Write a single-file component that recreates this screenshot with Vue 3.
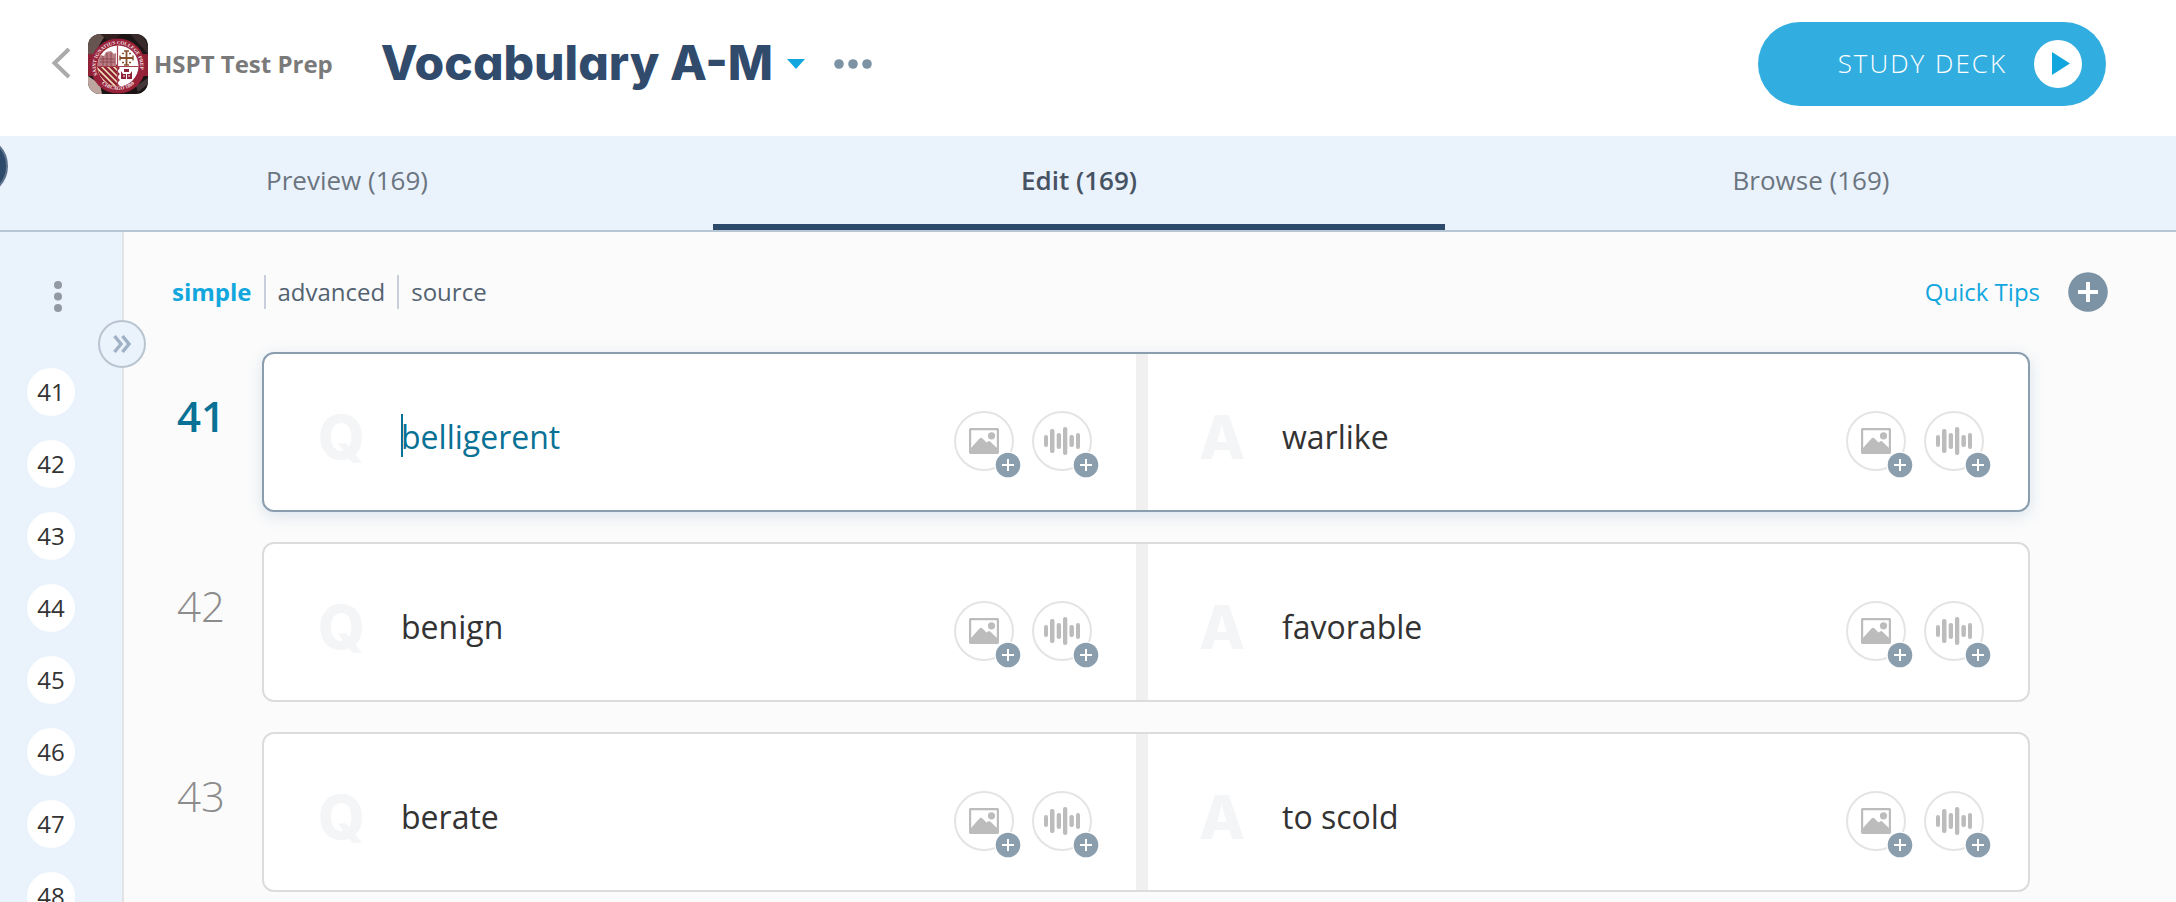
<script setup>
import { ref } from 'vue'

const tabs = [
  { id: 'preview', label: 'Preview (169)' },
  { id: 'edit', label: 'Edit (169)' },
  { id: 'browse', label: 'Browse (169)' },
]
const activeTab = ref('edit')

const modes = ['simple', 'advanced', 'source']
const activeMode = ref('simple')

const cardNumbers = [41, 42, 43, 44, 45, 46, 47, 48]
const activeCard = ref(41)

const cards = ref([
  { number: 41, sides: [{ key: 'Q', text: 'belligerent' }, { key: 'A', text: 'warlike' }] },
  { number: 42, sides: [{ key: 'Q', text: 'benign' }, { key: 'A', text: 'favorable' }] },
  { number: 43, sides: [{ key: 'Q', text: 'berate' }, { key: 'A', text: 'to scold' }] },
])
</script>

<template>
  <div class="page">
    <header class="header">
      <button class="icon-button back" type="button" aria-label="Back">
        <svg width="20" height="32" viewBox="0 0 20 32" fill="none" stroke="#aaaaaa" stroke-width="4">
          <path d="M18 1 3.500 15 18 29" />
        </svg>
      </button>
      <a class="class-link" href="#">
        <svg class="crest" width="60" height="60" viewBox="0 0 60 60" aria-hidden="true">
          <defs>
            <clipPath id="crestFrame"><rect width="60" height="60" rx="12" /></clipPath>
            <clipPath id="crestShield"><circle cx="30" cy="32" r="20.500" /></clipPath>
            <path id="ringTop" d="M9.500 41 A22.200 22.200 0 1 1 50.500 41" />
            <path id="ringBottom" d="M10 46 A25.200 25.200 0 0 0 50 46" />
          </defs>
          <g clip-path="url(#crestFrame)">
            <rect width="60" height="60" fill="#1c1415" />
            <path d="M0 0H18L6 20H0Z" fill="#65544f" />
            <path d="M12 0H34L22 8Z" fill="#31201f" />
            <path d="M42 0H54L60 12V20Z" fill="#382a2a" />
            <path d="M0 42 12 50 14 60H0Z" fill="#bda6a0" />
            <path d="M48 52 60 44V50L50 58Z" fill="#46383a" />
            <path d="M0 20H60V42H0Z" fill="#8e2136" />
            <circle cx="30" cy="32" r="27.500" fill="#982239" />
            <circle cx="30" cy="32" r="20.500" fill="#ffffff" />
            <g clip-path="url(#crestShield)">
              <path d="M9 32H29.500V54H9Z" fill="#f1e3b5" />
              <path d="M9 31 31 53M9 37 31 59M14 30 31 47M20 30 31 41M26 30 31 35" stroke="#8e2136" stroke-width="2.600" />
              <path d="M10 32V24L13 21 16 22 18 18 23 17 26 20 28 19V32Z" fill="#b77d82" />
              <path d="M12 25H27M12 28H27M15 22V32M19 19V32M23 19V32" stroke="#8f4651" stroke-width="1" />
              <path d="M29.500 11V54M9 32.500H51" stroke="#a63c4c" stroke-width="1.200" />
            </g>
            <path d="M38.500 17V31M32 24H45" stroke="#85502b" stroke-width="1.800" />
            <path d="M36 17H41M36 31H41M32 21.500V26.500M45 21.500V26.500" stroke="#85502b" stroke-width="1.400" />
            <path d="M34 19.500H36M41 19.500H43M34 28.500H36M41 28.500H43" stroke="#85502b" stroke-width="1.600" />
            <path d="M33 37 35 40H42L44 37V45H33ZM36 35H41V38H36Z" fill="#8e2136" />
            <path d="M35 42H37M40 42H42M38.500 39V45" stroke="#ffffff" stroke-width="1" />
            <text class="crest-text"><textPath href="#ringTop">SAINT IGNATIUS COLLEGE PREP</textPath></text>
            <text class="crest-text"><textPath href="#ringBottom" startOffset="50%" text-anchor="middle">CHICAGO 1869</textPath></text>
          </g>
        </svg>
        <span class="class-name">HSPT Test Prep</span>
      </a>
      <h1 class="title">Vocabulary A-M</h1>
      <button class="icon-button switcher" type="button" aria-label="Choose deck">
        <svg width="18" height="10" viewBox="0 0 18 10"><path d="M0 0H18L9 10Z" fill="#11a7de" /></svg>
      </button>
      <button class="icon-button more" type="button" aria-label="Deck options">
        <svg width="38" height="10" viewBox="0 0 38 10" fill="#7c93a5">
          <circle cx="5" cy="5" r="4.800" /><circle cx="19" cy="5" r="4.800" /><circle cx="33" cy="5" r="4.800" />
        </svg>
      </button>
      <button class="study" type="button">
        <span class="study-label">STUDY DECK</span>
        <svg width="48" height="48" viewBox="0 0 48 48" aria-hidden="true">
          <circle cx="24" cy="24" r="24" fill="#ffffff" />
          <path d="M18 12 36 23.500 18 35Z" fill="#11a7de" />
        </svg>
      </button>
    </header>

    <nav class="tabs">
      <button
        v-for="tab in tabs"
        :key="tab.id"
        type="button"
        class="tab"
        :class="{ active: tab.id === activeTab }"
        @click="activeTab = tab.id"
      >{{ tab.label }}</button>
      <button class="drawer" type="button" aria-label="Open menu"></button>
    </nav>

    <div class="body">
      <aside class="sidebar">
        <button class="icon-button side-menu" type="button" aria-label="Card list options">
          <svg width="8" height="32" viewBox="0 0 8 32" fill="#9299a3">
            <circle cx="4" cy="4" r="4" /><circle cx="4" cy="15.500" r="4" /><circle cx="4" cy="27" r="4" />
          </svg>
        </button>
        <button class="expand" type="button" aria-label="Expand card list">
          <svg width="20" height="20" viewBox="0 0 20 20" fill="none" stroke="#9fb1c4" stroke-width="3.400">
            <path d="M2.500 2 9 10 2.500 18M10.500 2 17 10 10.500 18" />
          </svg>
        </button>
        <ol class="numbers">
          <li v-for="n in cardNumbers" :key="n">
            <button class="bubble" type="button" @click="activeCard = n">{{ n }}</button>
          </li>
        </ol>
      </aside>

      <main class="main">
        <div class="toolbar">
          <div class="modes">
            <button
              v-for="mode in modes"
              :key="mode"
              type="button"
              class="mode"
              :class="{ active: mode === activeMode }"
              @click="activeMode = mode"
            >{{ mode }}</button>
          </div>
          <div class="tools">
            <a class="tips" href="#">Quick Tips</a>
            <button class="icon-button" type="button" aria-label="Add card">
              <svg width="40" height="40" viewBox="0 0 40 40">
                <circle cx="20" cy="20" r="19.800" fill="#7c93a5" />
                <path d="M20 10V30M10 20H30" stroke="#ffffff" stroke-width="4" />
              </svg>
            </button>
          </div>
        </div>

        <section
          v-for="card in cards"
          :key="card.number"
          class="row"
          :class="{ active: card.number === activeCard }"
        >
          <span class="row-number">{{ card.number }}</span>
          <div class="card">
            <div v-for="side in card.sides" :key="side.key" class="side">
              <label class="letter" :for="side.key + card.number">{{ side.key }}</label>
              <div class="field">
                <input :id="side.key + card.number" v-model="side.text" type="text" @focus="activeCard = card.number" />
                <span v-if="card.number === activeCard && side.key === 'Q'" class="cursor"></span>
              </div>
              <button class="media" type="button" aria-label="Add image">
                <svg width="30" height="26" viewBox="0 0 30 26">
                  <rect x="1" y="1" width="28" height="24" rx="1.500" fill="none" stroke="#bcbcbc" stroke-width="2.400" />
                  <circle cx="22.500" cy="7.800" r="3.600" fill="#bcbcbc" />
                  <path d="M2 20 10.500 10.500Q12 9 13.500 10.500L17.500 14.500 19.500 13.200Q20.500 12.800 21.500 13.800L28 20V25H2Z" fill="#bcbcbc" />
                </svg>
                <svg class="badge" width="28" height="28" viewBox="0 0 28 28">
                  <circle cx="14" cy="14" r="13.500" fill="#ffffff" />
                  <circle cx="14" cy="14" r="12.300" fill="#8a9eae" />
                  <path d="M14 8V20M8 14H20" stroke="#ffffff" stroke-width="2" />
                </svg>
              </button>
              <button class="media" type="button" aria-label="Add audio">
                <svg width="36" height="28" viewBox="0 0 36 28" fill="#bcbcbc">
                  <rect x="0" y="8" width="4" height="12" rx="2" />
                  <rect x="6" y="2" width="4.500" height="24" rx="2" />
                  <rect x="12.700" y="6" width="4.300" height="16" rx="2" />
                  <rect x="19" y="0" width="4.300" height="28" rx="2" />
                  <rect x="25.400" y="8" width="4.500" height="12" rx="2" />
                  <rect x="32" y="6" width="4" height="16" rx="2" />
                </svg>
                <svg class="badge" width="28" height="28" viewBox="0 0 28 28">
                  <circle cx="14" cy="14" r="13.500" fill="#ffffff" />
                  <circle cx="14" cy="14" r="12.300" fill="#8a9eae" />
                  <path d="M14 8V20M8 14H20" stroke="#ffffff" stroke-width="2" />
                </svg>
              </button>
            </div>
          </div>
        </section>
      </main>
    </div>
  </div>
</template>

<style>
body {
  margin: 0;
}
</style>

<style scoped>
.page {
  display: flex;
  flex-direction: column;
  height: 100vh;
  overflow: hidden;
  background: #fff;
  color: #333;
  font-family: "Open Sans", "Noto Sans", sans-serif;
  font-size: 24px;
}
.page *,
.page *::after {
  box-sizing: border-box;
}
button {
  padding: 0;
  border: 0;
  background: none;
  color: inherit;
  font: inherit;
  cursor: pointer;
}
svg {
  display: block;
  flex: none;
}
a {
  text-decoration: none;
}
.icon-button {
  flex: none;
}

.header {
  display: flex;
  align-items: center;
  flex: none;
  padding: 22px 70px 30px 51px;
}
.back {
  margin-right: 17px;
}
.class-link {
  display: flex;
  align-items: center;
  gap: 6px;
  color: #7a7a7a;
  font-weight: 700;
  white-space: nowrap;
}
.class-name,
.study-label,
.tips {
  padding-bottom: 2px;
}
.crest-text {
  fill: #f7e9ea;
  font-family: "Liberation Serif", serif;
  font-size: 5px;
  font-weight: 700;
}
.title {
  margin: 0 14px 0 48px;
  padding-bottom: 2px;
  color: #314b6c;
  font-family: Inter, "Open Sans", sans-serif;
  font-feature-settings: "cv11";
  font-size: 48px;
  font-weight: 800;
  line-height: 60px;
  white-space: nowrap;
}
.more {
  margin-left: 29px;
}
.study {
  display: flex;
  align-items: center;
  justify-content: flex-end;
  gap: 27px;
  width: 348px;
  height: 84px;
  margin-left: auto;
  padding-right: 24px;
  border-radius: 42px;
  background: #31addf;
  color: #fff;
  font-size: 26px;
  font-weight: 300;
  letter-spacing: 2px;
  white-space: nowrap;
}

.tabs {
  position: relative;
  display: flex;
  flex: none;
  margin: 0 -1px 0 -19px;
  border-bottom: 2px solid #b8c5d2;
  background: #eaf2fc;
}
.tab {
  flex: 1;
  height: 94px;
  border-bottom: 6px solid transparent;
  color: #6b7580;
  font-size: 26px;
}
.tab.active {
  border-bottom-color: #2e4a6b;
  color: #475363;
  font-weight: 600;
}
.drawer {
  position: absolute;
  top: 0;
  left: -33px;
  width: 60px;
  height: 60px;
  border: 2px solid #5d738e;
  border-radius: 50%;
  background: #2e4a6b;
}

.body {
  display: flex;
  flex: 1;
  min-height: 0;
}
.sidebar {
  position: relative;
  flex: none;
  width: 124px;
  border-right: 2px solid #e2e3e5;
  background: #eaf2fc;
}
.side-menu {
  display: block;
  margin: 49px 0 0 54px;
}
.expand {
  position: absolute;
  top: 88px;
  right: -24px;
  display: flex;
  align-items: center;
  justify-content: center;
  width: 48px;
  height: 48px;
  border: 2px solid #b8c5d0;
  border-radius: 50%;
  background: #eaf2fc;
}
.numbers {
  display: flex;
  flex-direction: column;
  gap: 24px;
  margin: 55px 0 0 27px;
  padding: 0;
  list-style: none;
}
.bubble {
  display: block;
  width: 48px;
  height: 48px;
  padding-bottom: 2px;
  border-radius: 50%;
  background: #fff;
  color: #333;
}

.main {
  flex: 1;
  min-width: 0;
  padding: 40px 68px 0 48px;
  background: #fbfbfb;
}
.toolbar {
  display: flex;
  align-items: center;
  justify-content: space-between;
  margin-bottom: 40px;
}
.modes {
  display: flex;
}
.mode {
  height: 34px;
  padding: 0 12px;
  border-right: 2px solid #c8cedb;
  color: #536271;
  line-height: 34px;
}
.mode:first-child {
  padding-left: 0;
}
.mode:last-child {
  border-right: 0;
}
.mode.active {
  color: #11a7de;
  font-weight: 700;
}
.tools {
  display: flex;
  align-items: center;
  gap: 28px;
}
.tips {
  color: #11a7de;
}

.row {
  display: flex;
  align-items: flex-start;
  gap: 32px;
  margin: 0 78px 30px 0;
}
.row-number {
  flex: none;
  width: 58px;
  padding-top: 36px;
  color: #8c8c8c;
  font-size: 42px;
  font-weight: 300;
  line-height: 56px;
  text-align: center;
}
.row.active .row-number {
  color: #087195;
  font-weight: 600;
}
.card {
  display: grid;
  flex: 1;
  grid-template-columns: 221fr 220fr;
  border: 2px solid #dcdcdc;
  border-radius: 12px;
  background: #fff;
}
.row.active .card {
  border-color: #8a9eb0;
  box-shadow: 0 4px 16px rgba(50, 110, 160, 0.16);
}
.side {
  display: flex;
  align-items: center;
  min-width: 0;
  height: 156px;
  padding: 18px 44px 0 51px;
}
.side:first-child {
  padding-left: 54px;
  border-right: 12px solid #f0f0f0;
}
.letter {
  flex: none;
  width: 83px;
  margin-bottom: 8px;
  color: #f4f5f7;
  font-family: Inter, "Open Sans", sans-serif;
  font-size: 60px;
  font-weight: 800;
  line-height: 60px;
}
.field {
  position: relative;
  flex: 1;
  min-width: 0;
  margin-bottom: 10px;
}
.field input {
  display: block;
  width: 100%;
  height: 44px;
  padding: 0;
  border: 0;
  outline: 0;
  background: transparent;
  color: #333;
  font: inherit;
  font-size: 32px;
}
.row.active .side:first-child input {
  color: #087195;
}
.cursor {
  position: absolute;
  top: 0;
  left: 0;
  width: 2px;
  height: 43px;
  background: #087195;
}
.media {
  position: relative;
  display: flex;
  align-items: center;
  justify-content: center;
  flex: none;
  width: 60px;
  height: 60px;
  margin-left: 18px;
  border: 2px solid #e4e4e4;
  border-radius: 50%;
}
.badge {
  position: absolute;
  right: -10px;
  bottom: -10px;
}
</style>
